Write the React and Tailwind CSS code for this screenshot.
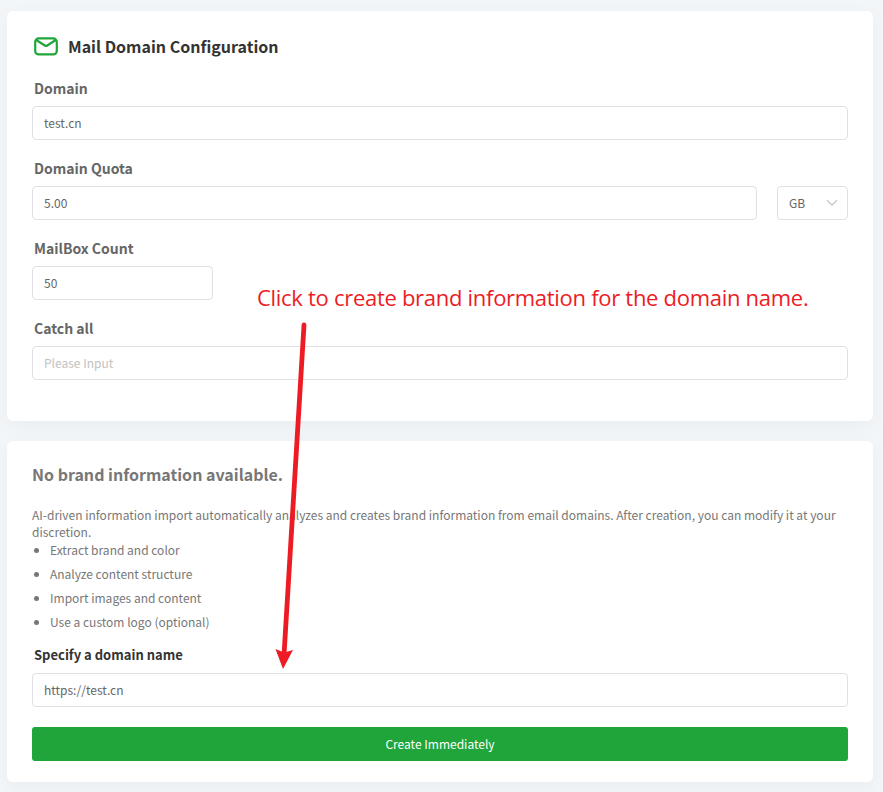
const label = 'pl-[2px] text-[14px] leading-5 font-bold text-[#666]';
const input =
  'block h-[34px] rounded-[4px] border border-[#e0e0e6] bg-white px-[11px] pb-[1px] text-[12px] text-[#666] outline-none placeholder:text-[#c2c2c2]';

function Field({ title, children }) {
  return (
    <div className="mb-[18px]">
      <div className={`mb-[8px] ${label}`}>{title}</div>
      {children}
    </div>
  );
}

function MailIcon() {
  return (
    <svg width="24" height="20" viewBox="0 0 24 20" fill="none" stroke="#20a53a" strokeWidth="2.2" strokeLinecap="round" strokeLinejoin="round">
      <rect x="1.2" y="2.4" width="21.6" height="16" rx="3.5" />
      <path d="M2.6 4.2 L11.2 9.7 Q12 10.2 12.8 9.7 L21.4 4.2" />
    </svg>
  );
}

const features = [
  'Extract brand and color',
  'Analyze content structure',
  'Import images and content',
  'Use a custom logo (optional)',
];

export default function App() {
  return (
    <div
      className="relative h-[792px] w-[883px] overflow-hidden bg-[#f2f6f9] pt-[11px] pl-[7px] font-['Noto_Sans_CJK_SC',sans-serif]"
    >
      <section className="h-[410px] w-[866px] rounded-[6px] bg-white px-[25px] pt-[24px] shadow-[0_5px_20px_rgba(0,0,0,0.04)]">
        <div className="mb-[21px] flex h-[22px] items-center gap-[10px] pl-[2px]">
          <MailIcon />
          <h1 className="text-[16px] leading-[22px] font-bold text-[#333]">Mail Domain Configuration</h1>
        </div>
        <Field title="Domain">
          <input className={`${input} w-full`} defaultValue="test.cn" />
        </Field>
        <Field title="Domain Quota">
          <div className="flex gap-5">
            <input className={`${input} min-w-0 flex-1`} defaultValue="5.00" />
            <button className="flex h-[34px] w-[71px] items-center justify-between rounded-[4px] border border-[#e0e0e6] pr-[9px] pl-[11px] text-[12px] text-[#666]">
              GB
              <svg width="12" height="8" viewBox="0 0 12 8" fill="none" stroke="#c2c2c2" strokeWidth="1.2">
                <path d="M1 1.2 L6 6.2 L11 1.2" />
              </svg>
            </button>
          </div>
        </Field>
        <Field title="MailBox Count">
          <input className={`${input} w-[181px]`} defaultValue="50" />
        </Field>
        <Field title="Catch all">
          <input className={`${input} w-full`} placeholder="Please Input" />
        </Field>
      </section>

      <section className="mt-5 h-[341px] w-[866px] rounded-[6px] bg-white px-[25px] pt-[21px] shadow-[0_5px_20px_rgba(0,0,0,0.04)]">
        <h2 className="text-[16px] leading-6 font-bold text-[#777]">No brand information available.</h2>
        <p className="mt-[20px] text-[12px] leading-[17px] text-[#777]">
          AI-driven information import automatically analyzes and creates brand information from email domains. After creation, you can modify it at your discretion.
        </p>
        <ul className="-mt-[2px] text-[12px] leading-6 text-[#777]">
          {features.map((f) => (
            <li key={f} className="flex items-center pl-[2px]">
              <span className="mr-[11px] size-[5px] rounded-full bg-[#777]" />
              {f}
            </li>
          ))}
        </ul>
        <div className="mt-[11px] mb-[8px] pl-[2px] text-[13px] leading-5 font-bold text-[#333]">Specify a domain name</div>
        <input className={`${input} w-full`} defaultValue="https://test.cn" />
        <button className="mt-5 h-[34px] w-full rounded-[3px] bg-[#20a53a] text-[12px] text-white">Create Immediately</button>
      </section>

      <div className="absolute top-[281px] left-[257px] text-[22px] leading-[32px] tracking-[-0.29px] whitespace-nowrap text-[#ed1c24] font-['Open_Sans',sans-serif]">
        Click to create brand information for the domain name.
      </div>
      <svg className="pointer-events-none absolute top-0 left-0" width="883" height="792">
        <path d="M304 325 L284.2 652" stroke="#ed1c24" strokeWidth="4.8" strokeLinecap="round" />
        <path d="M275.5 649 L284.2 652.5 L293 650 L283 669 Z" fill="#ed1c24" />
      </svg>
    </div>
  );
}
